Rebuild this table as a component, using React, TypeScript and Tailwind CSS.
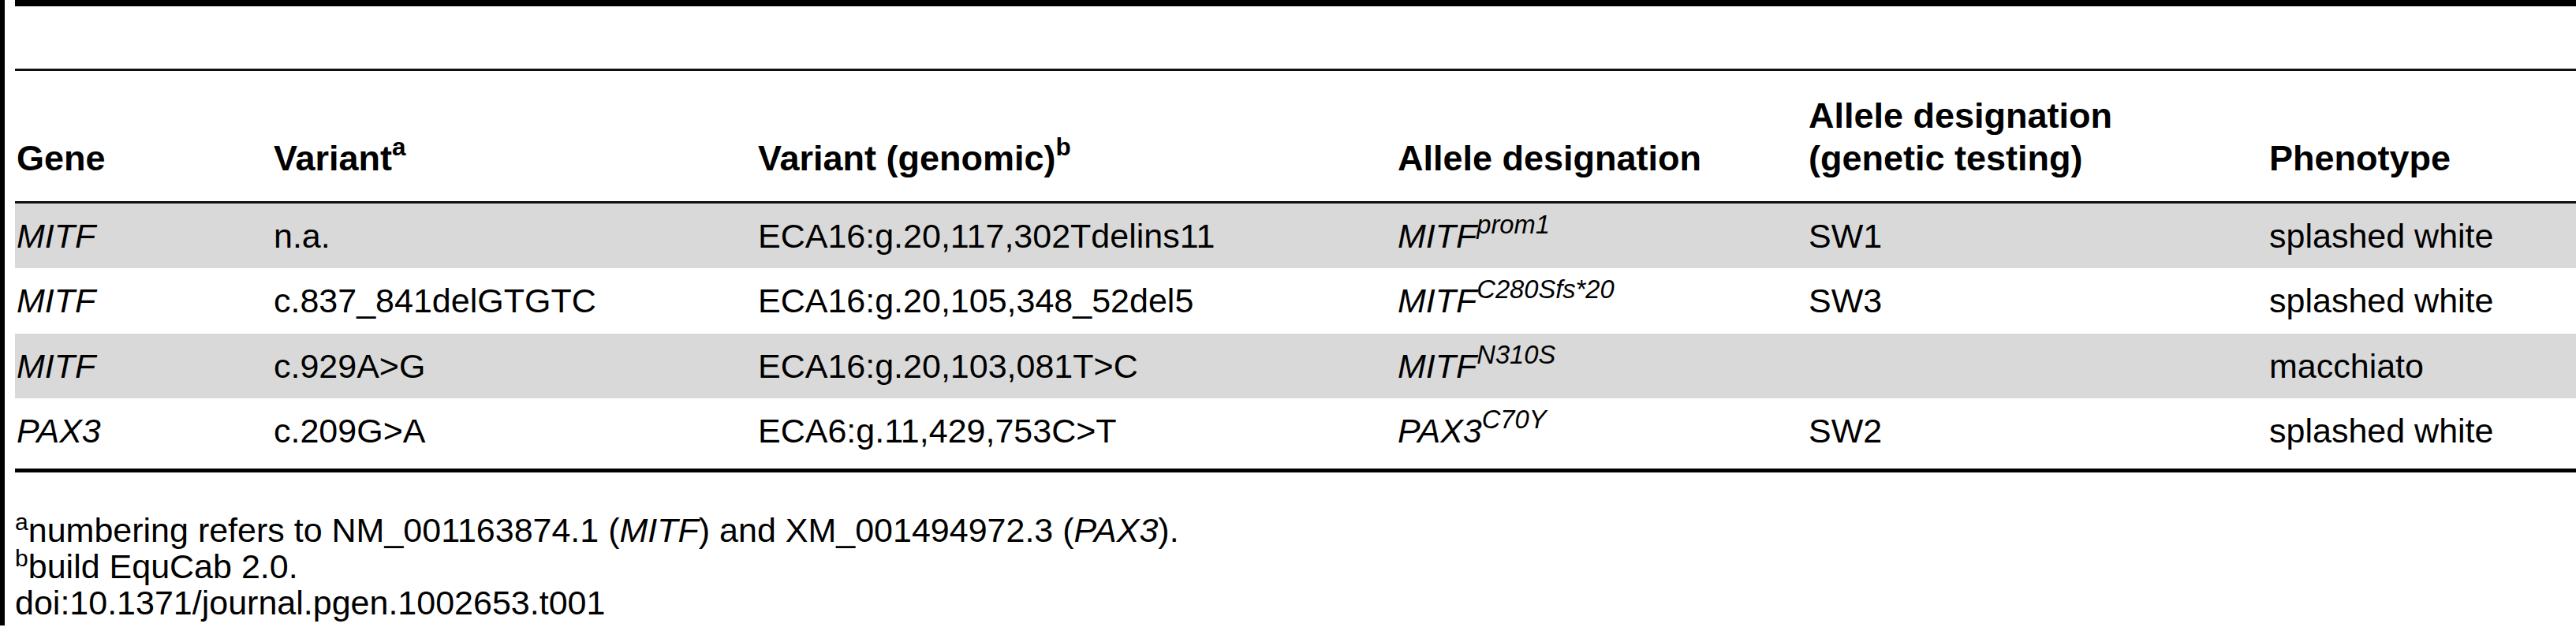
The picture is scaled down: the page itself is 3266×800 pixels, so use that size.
const cols = "grid grid-cols-[326px_614px_811px_521px_584px_1fr]";

type Row = {
  gene: string;
  variant: string;
  genomic: string;
  allele: string;
  sup: string;
  testing: string;
  phenotype: string;
};

const rows: Row[] = [
  {
    gene: "MITF",
    variant: "n.a.",
    genomic: "ECA16:g.20,117,302Tdelins11",
    allele: "MITF",
    sup: "prom1",
    testing: "SW1",
    phenotype: "splashed white",
  },
  {
    gene: "MITF",
    variant: "c.837_841delGTGTC",
    genomic: "ECA16:g.20,105,348_52del5",
    allele: "MITF",
    sup: "C280Sfs*20",
    testing: "SW3",
    phenotype: "splashed white",
  },
  {
    gene: "MITF",
    variant: "c.929A>G",
    genomic: "ECA16:g.20,103,081T>C",
    allele: "MITF",
    sup: "N310S",
    testing: "",
    phenotype: "macchiato",
  },
  {
    gene: "PAX3",
    variant: "c.209G>A",
    genomic: "ECA6:g.11,429,753C>T",
    allele: "PAX3",
    sup: "C70Y",
    testing: "SW2",
    phenotype: "splashed white",
  },
];

export default function App() {
  return (
    <div className="flex bg-white text-black font-['Liberation_Sans',Arial,sans-serif] w-[3266px] h-[800px] overflow-hidden">
      {/* left frame edge */}
      <div className="w-[6px] h-[793px] bg-black shrink-0" />

      <div className="ml-[13px] flex-1 flex flex-col">
        <div className="h-[8px] bg-black" />
        <div className="h-[79px]" />
        <div className="h-[3px] bg-[#111]" />

        {/* header */}
        <div className={`${cols} h-[165px] items-end pb-[27px] text-[45px] leading-[54px] font-bold`}>
          <div className="pl-[2px]">Gene</div>
          <div className="pl-[2px]">
            Variant<sup className="font-bold text-[0.7em] top-[-0.6em]">a</sup>
          </div>
          <div className="pl-[2px]">
            Variant (genomic)<sup className="font-bold text-[0.7em] top-[-0.6em]">b</sup>
          </div>
          <div className="pl-[2px]">Allele designation</div>
          <div className="pl-[2px]">
            Allele designation
            <br />
            (genetic testing)
          </div>
          <div className="pl-[2px]">Phenotype</div>
        </div>
        <div className="h-[3px] bg-[#111]" />

        {/* body */}
        <div className="text-[43px] leading-[49px]">
          {rows.map((r, i) => (
            <div
              key={i}
              className={`${cols} items-center ${i % 2 === 0 ? "bg-[#d9d9d9] h-[82px]" : "bg-white h-[83px]"}`}
            >
              <div className="pl-[2px] italic">{r.gene}</div>
              <div className="pl-[2px]">{r.variant}</div>
              <div className="pl-[2px]">{r.genomic}</div>
              <div className="pl-[2px] italic whitespace-nowrap">
                {r.allele}
                <sup className="text-[0.76em] top-[-0.55em]">{r.sup}</sup>
              </div>
              <div className="pl-[2px]">{r.testing}</div>
              <div className="pl-[2px]">{r.phenotype}</div>
            </div>
          ))}
        </div>
        <div className="h-[6px]" />
        <div className="h-[5px] bg-black" />

        {/* footnotes */}
        <div className="mt-[50px] text-[43px] leading-[46px] whitespace-nowrap">
          <p>
            <sup className="text-[0.7em]">a</sup>numbering refers to NM_001163874.1 (<i>MITF</i>) and
            XM_001494972.3 (<i>PAX3</i>).
          </p>
          <p>
            <sup className="text-[0.7em]">b</sup>build EquCab 2.0.
          </p>
          <p>doi:10.1371/journal.pgen.1002653.t001</p>
        </div>
      </div>
    </div>
  );
}
